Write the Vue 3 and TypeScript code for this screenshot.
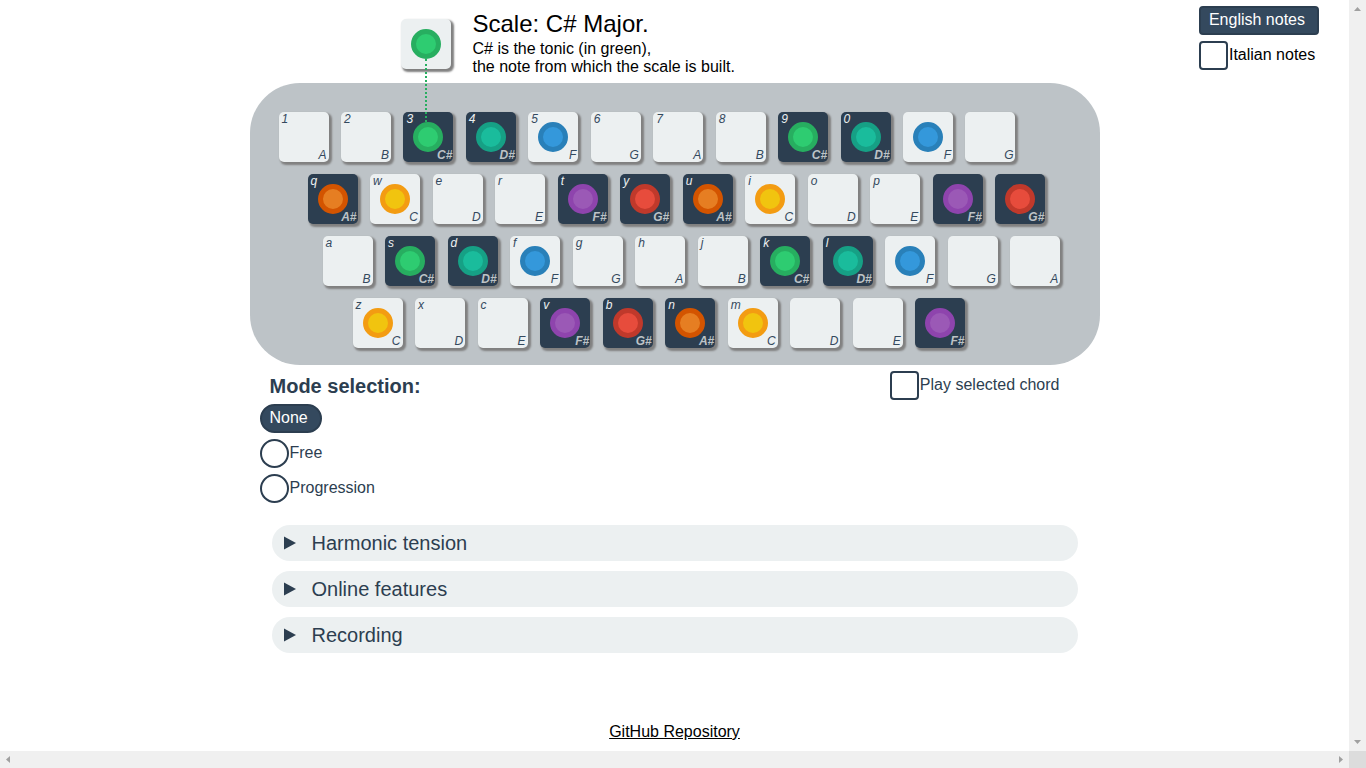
<script setup lang="ts">
import { ref } from 'vue'

interface Key {
  char: string
  note: string
}

const tones: Record<string, string> = {
  'C#': 'green',
  'D#': 'teal',
  F: 'blue',
  'F#': 'purple',
  'G#': 'red',
  'A#': 'orange',
  C: 'yellow',
}

function makeRow(chars: string, notes: string): Key[] {
  return notes.split(' ').map((note, i) => ({ char: chars[i] ?? '', note }))
}

const rows: Key[][] = [
  makeRow('1234567890', 'A B C# D# F G A B C# D# F G'),
  makeRow('qwertyuiop', 'A# C D E F# G# A# C D E F# G#'),
  makeRow('asdfghjkl', 'B C# D# F G A B C# D# F G A'),
  makeRow('zxcvbnm', 'C D E F# G# A# C D E F#'),
]

const notation = ref('English notes')
const notations = ['English notes', 'Italian notes']
const mode = ref('None')
const modes = ['None', 'Free', 'Progression']
const playChord = ref(false)
const panels = ['Harmonic tension', 'Online features', 'Recording']
</script>

<template>
  <div class="frame">
    <div class="page">
      <header class="scale">
        <div class="key tonic">
          <span class="dot green"></span>
          <span class="lead"></span>
        </div>
        <div>
          <h1>Scale: C# Major.</h1>
          <p>C# is the tonic (in green),<br />the note from which the scale is built.</p>
        </div>
      </header>

      <div class="notations" role="radiogroup" aria-label="Note names">
        <label v-for="n in notations" :key="n" class="choice" :class="{ on: notation === n }">
          <input v-model="notation" type="radio" name="notation" :value="n" />
          <span>{{ n }}</span>
        </label>
      </div>

      <main>
        <section class="keyboard" aria-label="Keyboard">
          <div v-for="(row, r) in rows" :key="r" class="row" :class="'row-' + (r + 1)">
            <button
              v-for="(k, i) in row"
              :key="i"
              type="button"
              class="key"
              :class="{ sharp: k.note.length > 1 }"
            >
              <span class="char">{{ k.char }}</span>
              <span v-if="tones[k.note]" class="dot" :class="tones[k.note]"></span>
              <span class="note">{{ k.note }}</span>
            </button>
          </div>
        </section>

        <section class="options">
          <div class="modes" role="radiogroup" aria-labelledby="mode-title">
            <h2 id="mode-title">Mode selection:</h2>
            <label v-for="m in modes" :key="m" class="choice round" :class="{ on: mode === m }">
              <input v-model="mode" type="radio" name="mode" :value="m" />
              <span>{{ m }}</span>
            </label>
          </div>
          <label class="choice chord" :class="{ on: playChord }">
            <input v-model="playChord" type="checkbox" />
            <span>Play selected chord</span>
          </label>
        </section>

        <section class="panels">
          <details v-for="p in panels" :key="p">
            <summary>
              <svg width="12" height="14" viewBox="0 0 12 14" aria-hidden="true">
                <path d="M0 0.5 L12 7 L0 13.5 Z" fill="#2c3e50" />
              </svg>
              {{ p }}
            </summary>
          </details>
        </section>

        <footer><a href="#">GitHub Repository</a></footer>
      </main>
    </div>

    <div class="bar vertical" aria-hidden="true">
      <svg width="17" height="17" viewBox="0 0 17 17"><path d="M5 11 L8.5 7 L12 11 Z" /></svg>
      <svg width="17" height="17" viewBox="0 0 17 17"><path d="M5 6 L12 6 L8.5 10 Z" /></svg>
    </div>
    <div class="bar" aria-hidden="true">
      <svg width="17" height="17" viewBox="0 0 17 17"><path d="M10 5 L6 8.5 L10 12 Z" /></svg>
      <svg width="17" height="17" viewBox="0 0 17 17"><path d="M7 5 L11 8.5 L7 12 Z" /></svg>
    </div>
    <div class="corner"></div>
  </div>
</template>

<style>
body {
  margin: 0;
  background: #fff;
}
</style>

<style scoped>
.frame {
  display: grid;
  grid-template-columns: minmax(0, 1fr) 17px;
  grid-template-rows: 1fr 17px;
  min-height: 100vh;
  font-family: 'Liberation Sans', Arial, sans-serif;
  font-size: 16px;
  line-height: 18px;
  color: #000;
}

.page {
  display: grid;
  grid-template-columns: 1fr minmax(0, 850px) 1fr;
  grid-template-rows: 83px auto;
}

.scale {
  grid-column: 2;
  display: flex;
  gap: 22px;
  padding: 9px 0 0 151px;
}

h1 {
  margin: 0 0 2px;
  font-size: 24px;
  font-weight: 400;
  line-height: 29px;
}

p {
  margin: 0;
}

main {
  grid-column: 2;
  color: #2c3e50;
}

.notations {
  display: flex;
  flex-direction: column;
  align-items: flex-start;
  justify-self: end;
  gap: 6px;
  padding: 6px 30px 0 0;
}

.key {
  position: relative;
  box-sizing: border-box;
  display: grid;
  place-items: center;
  flex: none;
  width: 50px;
  height: 50px;
  padding: 0;
  border: 0;
  border-radius: 5px;
  background: #ecf0f1;
  box-shadow: 2px 2px 2px 1px #808080;
  color: #34495e;
  font: italic 12px/14px 'Liberation Sans', Arial, sans-serif;
}

.key.sharp {
  background: #2c3e50;
  color: #bdc3c7;
}

.tonic {
  margin-top: 10px;
}

.char {
  position: absolute;
  top: 0;
  left: 3px;
}

.sharp .char {
  color: #ecf0f1;
}

.note {
  position: absolute;
  right: 2px;
  bottom: 0;
}

.sharp .note {
  right: 1px;
  font-weight: 700;
}

.dot {
  box-sizing: border-box;
  width: 30px;
  height: 30px;
  border: 5px solid;
  border-radius: 50%;
}

.green { background: #2ecc71; border-color: #27ae60; }
.teal { background: #1abc9c; border-color: #16a085; }
.blue { background: #3498db; border-color: #2980b9; }
.purple { background: #9b59b6; border-color: #8e44ad; }
.red { background: #e74c3c; border-color: #c0392b; }
.orange { background: #e67e22; border-color: #d35400; }
.yellow { background: #f1c40f; border-color: #f39c12; }

.lead {
  position: absolute;
  z-index: 2;
  top: 40px;
  left: 24px;
  height: 63px;
  border-left: 2px dotted #27ae60;
}

.keyboard {
  display: grid;
  gap: 12px;
  padding: 29px 0 17px;
  border-radius: 50px;
  background: #bdc3c7;
}

.row {
  display: flex;
  justify-content: space-between;
}

.row-1 { padding: 0 84px 0 29px; }
.row-2 { padding: 0 54px 0 58px; }
.row-3 { padding: 0 39px 0 73px; }
.row-4 { padding: 0 134px 0 103px; }

.options {
  display: flex;
  justify-content: space-between;
  align-items: flex-start;
  padding: 6px 40px 0 10px;
}

.modes {
  display: flex;
  flex-direction: column;
  align-items: flex-start;
  gap: 6px;
}

h2 {
  margin: 4px 0 0 10px;
  font-size: 20px;
  line-height: 23px;
}

.choice {
  position: relative;
  display: flex;
  align-items: center;
  gap: 1px;
  height: 29px;
  cursor: pointer;
}

.choice input {
  appearance: none;
  box-sizing: border-box;
  width: 29px;
  height: 29px;
  margin: 0;
  border: 2px solid #2c3e50;
  border-radius: 4px;
  background: #fff;
}

.choice span {
  position: relative;
  padding-bottom: 2px;
}

.choice.round input {
  border-radius: 15px;
}

.choice.on {
  padding: 0 14px 0 10px;
  color: #fff;
}

.choice.on input {
  position: absolute;
  inset: 0;
  width: 100%;
  background: #34495e;
}

.panels {
  display: grid;
  gap: 10px;
  padding: 22px;
}

summary {
  display: flex;
  align-items: center;
  gap: 16px;
  height: 36px;
  padding-left: 12px;
  border-radius: 18px;
  background: #ecf0f1;
  font-size: 20px;
  line-height: 23px;
  list-style: none;
  cursor: pointer;
}

footer {
  padding: 48px 0 10px;
  text-align: center;
}

footer a {
  color: #000;
}

.bar {
  display: flex;
  justify-content: space-between;
  background: #f0f0f0;
}

.bar.vertical {
  flex-direction: column;
}

.bar path {
  fill: #a0a0a0;
}

.corner {
  background: #dcdcdc;
}
</style>
